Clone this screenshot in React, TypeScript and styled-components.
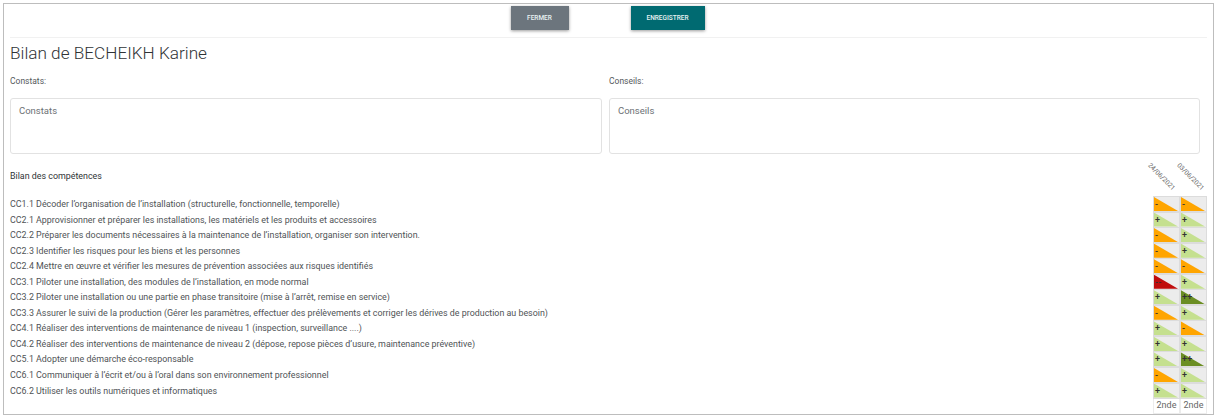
import styled, { createGlobalStyle } from "styled-components";

const GlobalStyle = createGlobalStyle`
  html, body {
    margin: 0;
    padding: 0;
    background: #ffffff;
    font-family: "Roboto", "Liberation Sans", sans-serif;
    color: #3c4043;
  }
`;

const Page = styled.div`
  box-sizing: border-box;
  width: 1211px;
  height: 412px;
  margin: 3px 0 0 3px;
  border: 1px solid #bdbdbd;
  padding: 2px 6px 0 6px;
`;

const Toolbar = styled.div`
  display: flex;
  justify-content: center;
  gap: 62px;
  height: 31px;
  padding-right: 2px;
  border-bottom: 1px solid #f1f1f1;
`;

const Button = styled.button`
  box-sizing: border-box;
  width: ${(props: { $width: number; $color: string }) => props.$width}px;
  height: 24px;
  border: none;
  padding: 0;
  background: ${(props: { $width: number; $color: string }) => props.$color};
  color: #e9f2f3;
  font-family: inherit;
  font-size: 6.5px;
  font-weight: 500;
  box-shadow: 0 1px 3px rgba(0, 0, 0, 0.4);
`;

const Title = styled.h1`
  margin: 4px 0 0 0;
  height: 22px;
  font-size: 17.2px;
  line-height: 22px;
  font-weight: 300;
  color: #2f3336;
`;

const Columns = styled.div`
  display: grid;
  grid-template-columns: 592px 591px;
  gap: 7px;
  margin-top: 11px;
`;

const Field = styled.div`
  display: flex;
  flex-direction: column;
`;

const FieldLabel = styled.label`
  font-size: 8.5px;
  line-height: 12px;
  color: #55595c;
`;

const TextBox = styled.textarea`
  box-sizing: border-box;
  margin-top: 11px;
  width: 100%;
  height: 56px;
  padding: 6px 8px;
  border: 1px solid #e2e2e2;
  border-radius: 3px;
  resize: none;
  font-family: inherit;
  font-size: 9.5px;
  color: #55595c;
  &::placeholder {
    color: #6c7175;
    opacity: 1;
  }
`;

const SectionHeader = styled.div`
  display: grid;
  grid-template-columns: 1fr 27px 27px;
  height: 42px;
`;

const SectionTitle = styled.div`
  padding-top: 16px;
  font-size: 8.9px;
  line-height: 12px;
  color: #2f3336;
`;

const DateLabel = styled.div`
  padding-top: 14px;
  font-size: 6.6px;
  line-height: 8px;
  white-space: nowrap;
  color: #666;
  text-align: center;
  transform: translate(${(props: { $shift: number }) => props.$shift}px, 1px) rotate(45deg);
`;

const Row = styled.div`
  display: grid;
  grid-template-columns: 1fr 27px 27px;
  height: 15.55px;
`;

const RowLabel = styled.div`
  padding-top: 1px;
  font-size: 8.9px;
  line-height: 15px;
  white-space: nowrap;
  color: #4f5356;
`;

const Cell = styled.div`
  position: relative;
  box-sizing: border-box;
  border: 1px solid #dcdcdc;
  background: #ececec;
  overflow: hidden;
`;

const Wedge = styled.div`
  position: absolute;
  inset: 0 1px 0 0;
  background: ${(props: { $color: string }) => props.$color};
  clip-path: polygon(0 0, 100% 100%, 0 100%);
`;

const Mark = styled.span`
  position: absolute;
  left: 1px;
  top: 1px;
  font-size: 9px;
  font-weight: 500;
  line-height: 13px;
  letter-spacing: 0.3px;
  color: #333;
`;

const ClassCell = styled.div`
  font-size: 9px;
  line-height: 15px;
  text-align: center;
  color: #666;
  border: 1px solid #ececec;
  border-top: none;
`;

const LEVELS: Record<string, string> = {
  "--": "#c00d0d",
  "-": "#ffa500",
  "+": "#c5e08f",
  "++": "#6b8e23",
};

const ROWS: [string, string, string][] = [
  ["CC1.1 Décoder l’organisation de l’installation (structurelle, fonctionnelle, temporelle)", "-", "-"],
  ["CC2.1 Approvisionner et préparer les installations, les matériels et les produits et accessoires", "+", "+"],
  ["CC2.2 Préparer les documents nécessaires à la maintenance de l’installation, organiser son intervention.", "-", "+"],
  ["CC2.3 Identifier les risques pour les biens et les personnes", "-", "+"],
  ["CC2.4 Mettre en œuvre et vérifier les mesures de prévention associées aux risques identifiés", "-", "-"],
  ["CC3.1 Piloter une installation, des modules de l’installation, en mode normal", "--", "+"],
  ["CC3.2 Piloter une installation ou une partie en phase transitoire (mise à l’arrêt, remise en service)", "+", "++"],
  ["CC3.3 Assurer le suivi de la production (Gérer les paramètres, effectuer des prélèvements et corriger les dérives de production au besoin)", "-", "+"],
  ["CC4.1 Réaliser des interventions de maintenance de niveau 1 (inspection, surveillance ....)", "+", "-"],
  ["CC4.2 Réaliser des interventions de maintenance de niveau 2 (dépose, repose pièces d’usure, maintenance préventive)", "+", "+"],
  ["CC5.1 Adopter une démarche éco-responsable", "+", "++"],
  ["CC6.1 Communiquer à l’écrit et/ou à l’oral dans son environnement professionnel", "-", "+"],
  ["CC6.2 Utiliser les outils numériques et informatiques", "+", "+"],
];

function LevelCell({ level }: { level: string }) {
  return (
    <Cell>
      <Wedge $color={LEVELS[level]} />
      <Mark>{level}</Mark>
    </Cell>
  );
}

export default function App() {
  return (
    <>
      <GlobalStyle />
      <Page>
        <Toolbar>
          <Button $width={58} $color="#6c757d">FERMER</Button>
          <Button $width={74} $color="#006a71">ENREGISTRER</Button>
        </Toolbar>
        <Title>Bilan de BECHEIKH Karine</Title>
        <Columns>
          <Field>
            <FieldLabel>Constats:</FieldLabel>
            <TextBox placeholder="Constats" />
          </Field>
          <Field>
            <FieldLabel>Conseils:</FieldLabel>
            <TextBox placeholder="Conseils" />
          </Field>
        </Columns>
        <SectionHeader>
          <SectionTitle>Bilan des compétences</SectionTitle>
          <DateLabel $shift={-10}>24/06/2021</DateLabel>
          <DateLabel $shift={-8}>03/06/2021</DateLabel>
        </SectionHeader>
        {ROWS.map(([label, first, second]) => (
          <Row key={label}>
            <RowLabel>{label}</RowLabel>
            <LevelCell level={first} />
            <LevelCell level={second} />
          </Row>
        ))}
        <Row>
          <span />
          <ClassCell>2nde</ClassCell>
          <ClassCell>2nde</ClassCell>
        </Row>
      </Page>
    </>
  );
}
